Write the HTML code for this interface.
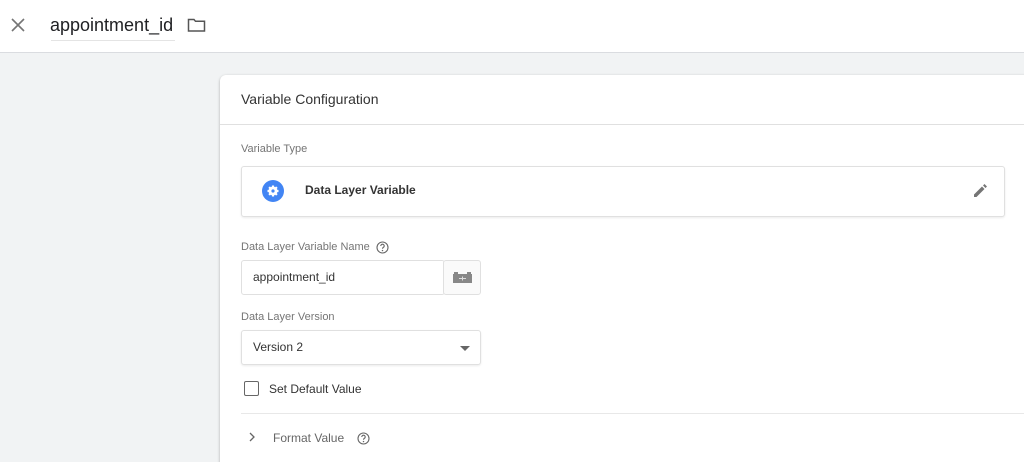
<!DOCTYPE html>
<html><head><style>
html,body{margin:0;width:1024px;height:462px;overflow:hidden}
body{background:#f1f3f4;font-family:"Liberation Sans",Arial,sans-serif;position:relative}
.top{position:absolute;left:0;top:0;width:1024px;height:52px;background:#fff;border-bottom:1px solid #dadce0}
.abs{position:absolute}
.card{position:absolute;left:220px;top:75px;width:820px;height:400px;background:#fff;border-radius:6px;box-shadow:0 1px 3px rgba(0,0,0,.2),0 1px 2px rgba(0,0,0,.1)}
.lbl{font-size:11px;color:#757575}
.box{position:absolute;border:1px solid #e0e0e0;border-radius:3px;background:#fff}
</style></head><body>
<div class="top">
<svg class="abs" style="left:11px;top:18px" width="14" height="14" viewBox="0 0 14 14"><path d="M1 1L13 13M13 1L1 13" stroke="#757575" stroke-width="1.6"/></svg>
<div class="abs" style="left:50px;top:15px;font-size:18px;color:#202124">appointment_id</div>
<div class="abs" style="left:51px;top:40px;width:124px;height:1px;background:#e4e4e4"></div>
<svg class="abs" style="left:187px;top:17px" width="19" height="16" viewBox="0 0 19 16"><path d="M1.5 2.5h5.5l1.5 1.8h9v9.7h-16z" fill="none" stroke="#555" stroke-width="1.5"/></svg>
</div>
<div class="card">
<div class="abs" style="left:21px;top:16px;font-size:14px;color:#333">Variable Configuration</div>
<div class="abs" style="left:0;top:49px;width:820px;height:1px;background:#e0e0e0"></div>
<div class="abs lbl" style="left:21px;top:68px">Variable Type</div>
<div class="box" style="left:21px;top:91px;width:762px;height:49px;box-shadow:0 1px 2px rgba(0,0,0,.08)">
<svg class="abs" style="left:20px;top:13px" width="22" height="22" viewBox="0 0 22 22"><circle cx="11" cy="11" r="11" fill="#4285f4"/><circle cx="11" cy="11" r="4.5" fill="#fff"/><path d="M11 5.5v11M5.5 11h11M7.1 7.1l7.8 7.8M14.9 7.1l-7.8 7.8" stroke="#fff" stroke-width="2.2"/><circle cx="11" cy="11" r="1.6" fill="#4285f4"/></svg>
<div class="abs" style="left:63px;top:16px;font-size:12px;font-weight:bold;color:#333">Data Layer Variable</div>
<svg class="abs" style="left:730px;top:16px" width="16" height="16" viewBox="0 0 16 16"><path d="M2 11.5V14h2.5l8-8L10 3.5zM11 2.5l1.5-1.5 2.5 2.5L13.5 5z" fill="#757575"/></svg>
</div>
<div class="abs lbl" style="left:21px;top:166px">Data Layer Variable Name</div>
<svg class="abs" style="left:156px;top:166px" width="13" height="13" viewBox="0 0 13 13"><circle cx="6.5" cy="6.5" r="5.5" fill="none" stroke="#666" stroke-width="1.1"/><path d="M4.8 5a1.7 1.7 0 113 1c-.8.6-1.3.8-1.3 1.7" fill="none" stroke="#666" stroke-width="1.1"/><circle cx="6.5" cy="9.6" r=".7" fill="#666"/></svg>
<div class="box" style="left:21px;top:185px;width:202px;height:33px"><div class="abs" style="left:11px;top:9px;font-size:12px;color:#333">appointment_id</div></div>
<div class="box" style="left:223px;top:185px;width:36px;height:33px;background:#fafafa"><svg class="abs" style="left:9px;top:11px" width="19" height="11" viewBox="0 0 19 11"><rect x="0" y="2" width="19" height="9" fill="#888"/><rect x="1" y="0" width="4" height="3" fill="#888"/><rect x="14" y="0" width="4" height="3" fill="#888"/><path d="M6 6.5h7M9.5 4.5v4" stroke="#ddd" stroke-width="1"/></svg></div>
<div class="abs lbl" style="left:21px;top:236px">Data Layer Version</div>
<div class="box" style="left:21px;top:255px;width:238px;height:33px;box-shadow:0 1px 2px rgba(0,0,0,.08)"><div class="abs" style="left:11px;top:9px;font-size:12px;color:#333">Version 2</div>
<div class="abs" style="left:218px;top:15px;width:0;height:0;border-left:5px solid transparent;border-right:5px solid transparent;border-top:5px solid #666"></div></div>
<div class="abs" style="left:24px;top:306px;width:13px;height:13px;border:1.5px solid #666;border-radius:2px"></div>
<div class="abs" style="left:49px;top:307px;font-size:12px;color:#333">Set Default Value</div>
<div class="abs" style="left:21px;top:338px;width:800px;height:1px;background:#e8e8e8"></div>
<svg class="abs" style="left:28px;top:357px" width="8" height="10" viewBox="0 0 8 10"><path d="M2 1l4 4-4 4" fill="none" stroke="#666" stroke-width="1.3"/></svg>
<div class="abs" style="left:53px;top:356px;font-size:12px;color:#666">Format Value</div>
<svg class="abs" style="left:137px;top:357px" width="13" height="13" viewBox="0 0 13 13"><circle cx="6.5" cy="6.5" r="5.5" fill="none" stroke="#666" stroke-width="1.1"/><path d="M4.8 5a1.7 1.7 0 113 1c-.8.6-1.3.8-1.3 1.7" fill="none" stroke="#666" stroke-width="1.1"/><circle cx="6.5" cy="9.6" r=".7" fill="#666"/></svg>
</div>
</body></html>
